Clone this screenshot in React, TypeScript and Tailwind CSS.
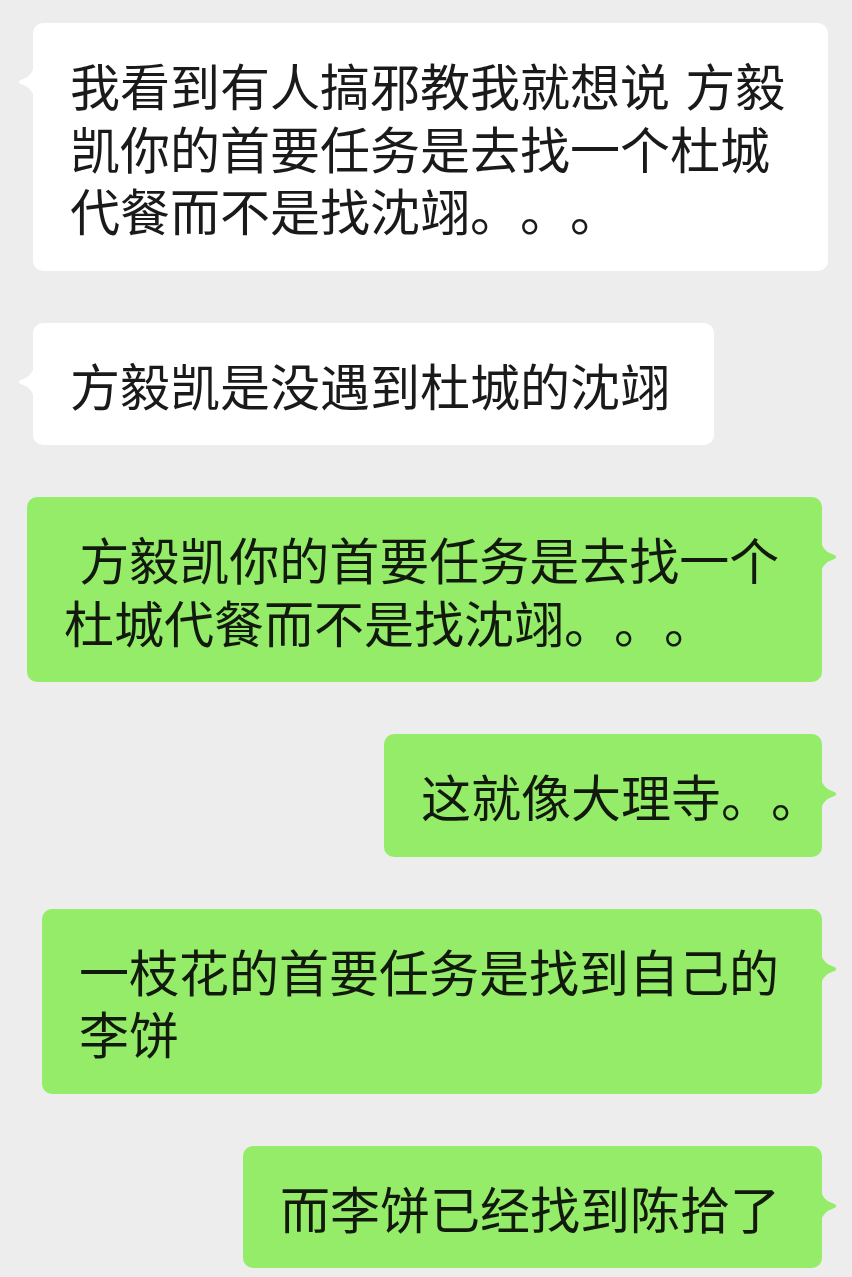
import React from 'react';

type Msg = {
  side: 'left' | 'right';
  width: string;
  lines: string[];
};

const messages: Msg[] = [
  {
    side: 'left',
    width: 'w-[795px]',
    lines: ['我看到有人搞邪教我就想说 方毅', '凯你的首要任务是去找一个杜城', '代餐而不是找沈翊。。。'],
  },
  { side: 'left', width: 'w-[681px]', lines: ['方毅凯是没遇到杜城的沈翊'] },
  {
    side: 'right',
    width: 'w-[795px]',
    lines: [' 方毅凯你的首要任务是去找一个', '杜城代餐而不是找沈翊。。。'],
  },
  { side: 'right', width: 'w-[438px]', lines: ['这就像大理寺。。'] },
  {
    side: 'right',
    width: 'w-[780px]',
    lines: ['一枝花的首要任务是找到自己的', '李饼'],
  },
  { side: 'right', width: 'w-[579px]', lines: ['而李饼已经找到陈拾了'] },
];

const Tail = ({ side }: { side: 'left' | 'right' }) => {
  const left = side === 'left';
  return (
    <svg
      width="16"
      height="34"
      viewBox="0 0 16 34"
      className={
        left
          ? 'absolute left-[-15px] top-[42px] fill-white'
          : 'absolute right-[-15px] top-[43px] -scale-x-100 fill-[#95ec69]'
      }
    >
      <path d="M16 0 C16 5 13 9 9.5 12 L1.6 15.4 Q0 17 1.6 18.6 L9.5 22 C13 25 16 29 16 34 Z" />
    </svg>
  );
};

const Bubble = ({ msg }: { msg: Msg }) => {
  const left = msg.side === 'left';
  return (
    <div className={left ? 'flex justify-start pl-[33px]' : 'flex justify-end pr-[30px]'}>
      <div
        className={`relative ${msg.width} rounded-[10px] pl-[37px] pr-[20px] py-[30px] ${
          left ? 'bg-white text-[#1a1a1a]' : 'bg-[#95ec69] text-[#111a0c]'
        }`}
      >
        <Tail side={msg.side} />
        {/* one text block per message, lines broken as in the chat */}
        <p className="whitespace-pre text-[50px] leading-[62.5px] [word-spacing:4px] [text-spacing-trim:space-all]">
          {msg.lines.map((line, i) => (
            <React.Fragment key={i}>
              {i > 0 && <br />}
              {line}
            </React.Fragment>
          ))}
        </p>
      </div>
    </div>
  );
};

export default function App() {
  return (
    <div
      className="min-h-screen bg-[#ededed] flex flex-col gap-[52px] pt-[23px] pb-[10px]"
      style={{ fontFamily: '"Noto Sans CJK SC", "Noto Sans", sans-serif' }}
    >
      {messages.map((m, i) => (
        <Bubble key={i} msg={m} />
      ))}
    </div>
  );
}
